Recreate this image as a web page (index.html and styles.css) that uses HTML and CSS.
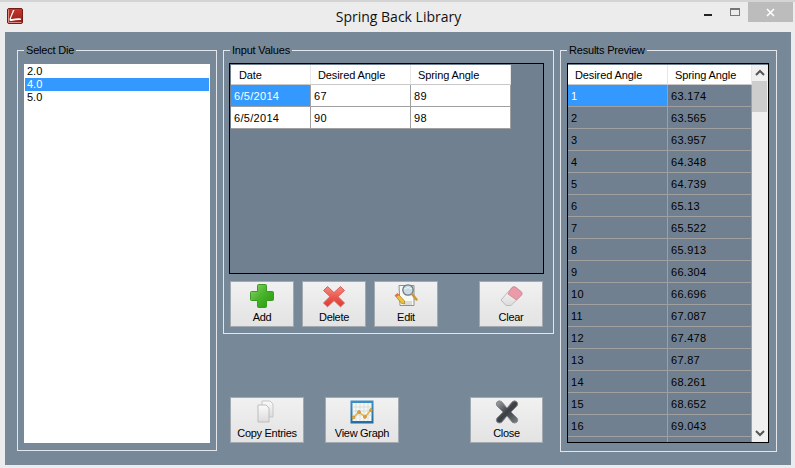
FILE: index.html
```html
<!DOCTYPE html>
<html lang="en">
<head>
<meta charset="utf-8">
<title>Spring Back Library</title>
<link rel="stylesheet" href="styles.css">
</head>
<body>
<svg class="defs" width="0" height="0" aria-hidden="true">
  <defs>
    <linearGradient id="gGreen" x1="0" y1="0" x2="1" y2="1"><stop offset="0" stop-color="#8fd67a"/><stop offset=".45" stop-color="#4cb52c"/><stop offset="1" stop-color="#1f9a06"/></linearGradient>
    <linearGradient id="gRed" x1="0" y1="0" x2="0" y2="1"><stop offset="0" stop-color="#f58a80"/><stop offset=".5" stop-color="#ec5a50"/><stop offset="1" stop-color="#d83c34"/></linearGradient>
    <linearGradient id="gDark" x1="0" y1="0" x2="1" y2="1"><stop offset="0" stop-color="#a5a9ad"/><stop offset=".5" stop-color="#3a3e42"/><stop offset="1" stop-color="#7d8286"/></linearGradient>
    <linearGradient id="gPaper" x1="0" y1="0" x2="0" y2="1"><stop offset="0" stop-color="#fafafa"/><stop offset="1" stop-color="#dcdcdc"/></linearGradient>
    <linearGradient id="gSky" x1="0" y1="0" x2="0" y2="1"><stop offset="0" stop-color="#3f8fc4"/><stop offset="1" stop-color="#1e6ea4"/></linearGradient>
    <linearGradient id="gLogo" x1="0" y1="0" x2="0" y2="1"><stop offset="0" stop-color="#c8372f"/><stop offset="1" stop-color="#8e2019"/></linearGradient>
  </defs>
</svg>
<div class="window">
  <header class="titlebar">
    <div class="title-left">
      <svg class="logo" width="16" height="16" viewBox="0 0 16 16"><rect x=".5" y=".5" width="15" height="15" rx="1.5" fill="url(#gLogo)" stroke="#7a1a14"/><path d="M1.5 1.5 V14.5 H14.5" stroke="#e08a84" fill="none"/><path d="M7.5 2 L4 10 Q3.6 11.4 5.2 11 Q9.5 10 14 10.4 L14 12 Q9 11.8 4.6 13 Q2 13.4 2.6 10.4 L6 2 Z" fill="#fff"/></svg>
    </div>
    <h1 class="title">Spring Back Library</h1>
    <div class="controls">
      <span class="ctl ctl-min"><i></i></span>
      <span class="ctl ctl-max"><i></i></span>
      <span class="ctl ctl-close"><svg width="9" height="9" viewBox="0 0 9 9"><path d="M1 1 L8 8 M8 1 L1 8" stroke="#fff" stroke-width="1.6" fill="none"/></svg></span>
    </div>
  </header>

  <main class="client">
    <fieldset class="group group-die">
      <legend>Select Die</legend>
      <ul class="listbox">
        <li>2.0</li>
        <li class="selected">4.0</li>
        <li>5.0</li>
      </ul>
    </fieldset>

    <div class="middle">
      <fieldset class="group group-input">
        <legend>Input Values</legend>
        <div class="datagrid input-grid">
          <table>
            <thead><tr><th class="c-date">Date</th><th class="c-a">Desired Angle</th><th class="c-a">Spring Angle</th></tr></thead>
            <tbody>
              <tr><td class="sel">6/5/2014</td><td class="white">67</td><td class="white">89</td></tr>
              <tr><td class="white">6/5/2014</td><td class="white">90</td><td class="white">98</td></tr>
            </tbody>
          </table>
        </div>
        <div class="btnrow">
          <button class="btn btn-s">
            <svg width="24" height="24" viewBox="0 0 24 24"><path d="M8.5 .5 H15.5 Q16.5 .5 16.5 1.5 V7.5 H22.5 Q23.5 7.5 23.5 8.5 V15.5 Q23.5 16.5 22.5 16.5 H16.5 V22.5 Q16.5 23.5 15.5 23.5 H8.5 Q7.5 23.5 7.5 22.5 V16.5 H1.5 Q.5 16.5 .5 15.5 V8.5 Q.5 7.5 1.5 7.5 H7.5 V1.5 Q7.5 .5 8.5 .5 Z" fill="url(#gGreen)" stroke="#3c9a22"/></svg>
            <span>Add</span>
          </button>
          <button class="btn btn-s">
            <svg width="24" height="24" viewBox="0 0 24 24"><path d="M5.5 2.5 L12 8.6 L18.5 2.5 L22.5 6.5 L16 12.6 L22.5 19 L18.5 22.8 L12 16.6 L5.5 22.8 L1.5 19 L8 12.6 L1.5 6.5 Z" fill="url(#gRed)" stroke="#d9605a" stroke-linejoin="round" stroke-width="1"/></svg>
            <span>Delete</span>
          </button>
          <button class="btn btn-s">
            <svg width="24" height="24" viewBox="0 0 24 24"><path d="M5 1.5 H20 V21.5 H6 Z" fill="#f8f8f4" stroke="#8a948e"/><path d="M10 18 H18 M11 20 H18" stroke="#b5bcc0"/><circle cx="14" cy="6" r="5.2" fill="#c8dbe6" stroke="#6f7b80" stroke-width="1.3"/><path d="M10 5 Q14 2 18 5" stroke="#eef6fa" fill="none"/><path d="M18 10 L22.5 15.5" stroke="#c9963c" stroke-width="2.4" stroke-linecap="round"/><path d="M1 11.5 L3.6 9.5 L10.5 17 L10.5 20 L7.6 19.4 Z" fill="#f0c23c" stroke="#a67a1a" stroke-width=".7"/><path d="M1 11.5 L3.6 9.5 L5 11 L2.4 13 Z" fill="#e8665c"/></svg>
            <span>Edit</span>
          </button>
          <button class="btn btn-s btn-push">
            <svg width="24" height="24" viewBox="0 0 24 24"><path d="M2 16 L13 3.5 Q15 2 17 3.5 L22.5 8 Q23.5 9.5 22.5 11 L12 21.5 L7 21.5 Z" fill="url(#gPaper)" stroke="#b9b9b9"/><path d="M9 10 L13 3.5 Q15 2 17 3.5 L22.5 8 Q23.5 9.5 22.5 11 L17.5 16 Z" fill="#ea9aa8" stroke="#d58090" stroke-width=".8"/></svg>
            <span>Clear</span>
          </button>
        </div>
      </fieldset>
      <div class="btnrow btnrow-bottom">
        <button class="btn btn-l">
          <svg width="24" height="24" viewBox="0 0 24 24"><path d="M7 1 H15 L18 4 V17 H7 Z" fill="url(#gPaper)" stroke="#c6c6c6"/><path d="M3 5 H11 L14 8 V22 H3 Z" fill="url(#gPaper)" stroke="#bdbdbd"/></svg>
          <span>Copy Entries</span>
        </button>
        <button class="btn btn-l btn-view">
          <svg width="24" height="24" viewBox="0 0 24 24"><rect x=".5" y=".5" width="23" height="23" fill="url(#gSky)"/><rect x="2.5" y="3" width="19" height="18" fill="#f6f6f0"/><path d="M6 3 V21 M10 3 V21 M14 3 V21 M18 3 V21 M2.5 7 H21.5 M2.5 11 H21.5 M2.5 15 H21.5" stroke="#c9d6dc" stroke-width=".7"/><path d="M3 18 L9 12 L15 17 L21 10" stroke="#eeb23c" stroke-width="1.6" fill="none"/><circle cx="3.5" cy="17.5" r="1.4" fill="#eeb23c" stroke="#a8761f" stroke-width=".6"/><circle cx="9" cy="12" r="1.4" fill="#eeb23c" stroke="#a8761f" stroke-width=".6"/><circle cx="15" cy="17" r="1.4" fill="#eeb23c" stroke="#a8761f" stroke-width=".6"/><circle cx="21" cy="10" r="1.4" fill="#eeb23c" stroke="#a8761f" stroke-width=".6"/></svg>
          <span>View Graph</span>
        </button>
        <button class="btn btn-c btn-close-gap">
          <svg width="24" height="24" viewBox="0 0 24 24"><path d="M6.5 1.5 L12 8 L17.5 1.5 Q20 0 22 2 Q23.5 4 22 6 L16 12 L22 18 Q23.5 20 22 22 Q20 23.8 17.5 22.5 L12 16 L6.5 22.5 Q4 23.8 2 22 Q.5 20 2 18 L8 12 L2 6 Q.5 4 2 2 Q4 0 6.5 1.5 Z" fill="url(#gDark)" stroke="#85898d" stroke-width="1"/></svg>
          <span>Close</span>
        </button>
      </div>
    </div>

    <fieldset class="group group-results">
      <legend>Results Preview</legend>
      <div class="datagrid results-grid">
        <div class="results-table">
          <table>
            <thead><tr><th class="r-a">Desired Angle</th><th class="r-b">Spring Angle</th></tr></thead>
            <tbody>
              <tr><td class="sel">1</td><td>63.174</td></tr>
              <tr><td>2</td><td>63.565</td></tr>
              <tr><td>3</td><td>63.957</td></tr>
              <tr><td>4</td><td>64.348</td></tr>
              <tr><td>5</td><td>64.739</td></tr>
              <tr><td>6</td><td>65.13</td></tr>
              <tr><td>7</td><td>65.522</td></tr>
              <tr><td>8</td><td>65.913</td></tr>
              <tr><td>9</td><td>66.304</td></tr>
              <tr><td>10</td><td>66.696</td></tr>
              <tr><td>11</td><td>67.087</td></tr>
              <tr><td>12</td><td>67.478</td></tr>
              <tr><td>13</td><td>67.87</td></tr>
              <tr><td>14</td><td>68.261</td></tr>
              <tr><td>15</td><td>68.652</td></tr>
              <tr><td>16</td><td>69.043</td></tr>
              <tr><td>&nbsp;</td><td>&nbsp;</td></tr>
            </tbody>
          </table>
        </div>
        <div class="scrollbar">
          <svg class="arrow" width="16" height="16" viewBox="0 0 16 16"><path d="M4 10 L8 6 L12 10" stroke="#555" stroke-width="2" fill="none"/></svg>
          <div class="thumb"></div>
          <svg class="arrow arrow-down" width="16" height="16" viewBox="0 0 16 16"><path d="M4 6 L8 10 L12 6" stroke="#555" stroke-width="2" fill="none"/></svg>
        </div>
      </div>
    </fieldset>
  </main>
</div>
</body>
</html>
```

FILE: styles.css
```css
* { box-sizing: border-box; }
html, body { margin: 0; padding: 0; }
body {
  width: 795px;
  height: 468px;
  overflow: hidden;
  background: #ececec;
  font-family: "Liberation Sans", Arial, sans-serif;
  font-size: 11px;
  color: #000;
}
.defs { display: block; height: 0; }
.window {
  height: 468px;
  display: flex;
  flex-direction: column;
  border-top: 2px solid #d4d4d4;
}
.titlebar {
  height: 30px;
  display: grid;
  grid-template-columns: 1fr auto 1fr;
  align-items: start;
}
.title-left { padding: 6px 0 0 7px; }
.logo { display: block; }
.title {
  margin: 0;
  padding: 6px 0 0 2px;
  font-family: "Open Sans", sans-serif;
  font-size: 14px;
  line-height: 18px;
  font-weight: 400;
  color: #111;
}
.controls {
  display: flex;
  justify-content: flex-end;
  align-items: flex-start;
  padding-right: 2px;
}
.ctl { display: flex; align-items: center; justify-content: center; height: 20px; }
.ctl-min { width: 28px; }
.ctl-min i { display: block; width: 8px; height: 2px; margin-top: 6px; background: #222; }
.ctl-max { width: 26px; }
.ctl-max i { display: block; width: 10px; height: 8px; border: 1px solid #777; border-top-width: 2px; }
.ctl-close { width: 45px; background: #bcbcbc; }
.client {
  flex: 1;
  margin: 0 4px 3px 5px;
  padding: 12px 0 0 12px;
  background: #778899;
  display: grid;
  grid-template-columns: 200px 331px 217px;
  column-gap: 6px;
  align-items: start;
}
.group {
  margin: 0;
  min-width: 0;
  border: 1px solid #e3e6ea;
}
.group legend {
  margin-left: 0;
  padding: 0 2px;
  line-height: 13px;
  letter-spacing: -.2px;
  color: #000;
}
.group-die { height: 407px; padding: 7px 6px 7px 6px; }
.listbox {
  list-style: none;
  margin: 0;
  padding: 1px 1px;
  height: 379px;
  background: #fff;
}
.listbox li { height: 13px; line-height: 13px; padding-left: 2px; }
.listbox li.selected { background: #3399ff; color: #fff; }
.middle { display: flex; flex-direction: column; }
.group-input { height: 290px; padding: 6px 9px 0 5px; }
.group-input legend { margin-left: 1px; }
.datagrid {
  border: 1px solid #000;
  background: #708090;
  padding-top: 1px;
}
.input-grid { height: 211px; padding-left: 1px; }
table { border-collapse: separate; border-spacing: 0; table-layout: fixed; }
.input-grid table { width: 280px; }
th {
  height: 20px;
  padding: 0 0 0 7px;
  background: #fff;
  font-weight: 400;
  text-align: left;
  letter-spacing: -.1px;
  border-right: 1px solid #e6e6e6;
  border-bottom: 1px solid #c8c8c8;
}
td {
  height: 22px;
  padding: 0 0 0 3px;
  letter-spacing: .3px;
  border-right: 1px solid #a0a0a0;
  border-bottom: 1px solid #a0a0a0;
  background: #708090;
}
td.white { background: #fff; }
td.sel { background: #3399ff; color: #fff; }
.c-date { width: 80px; }
th.c-date { padding-left: 8px; }
.c-a { width: 100px; }
.btnrow { display: flex; gap: 8px; margin-top: 7px; padding-left: 1px; }
.btnrow-bottom { margin-top: 63px; padding-left: 7px; gap: 21px; }
.btn {
  height: 46px;
  padding: 2px 0 0;
  display: flex;
  flex-direction: column;
  align-items: center;
  gap: 3px;
  border: 1px solid #a3a9b0;
  border-radius: 0;
  background: linear-gradient(#f1f1f1, #e3e3e3);
  font: inherit;
  letter-spacing: -.3px;
  color: #000;
}
.btn svg { display: block; flex: none; }
.btn span { line-height: 13px; }
.btn-s { width: 64px; }
.btn-l { width: 74px; }
.btn-c { width: 73px; }
.btn-push { margin-left: 33px; }
.btn-close-gap { margin-left: 50px; }
.group-results { height: 408px; padding: 6px 7px 0 6px; }
.results-grid { height: 380px; display: flex; overflow: hidden; }
.results-table { width: 184px; height: 377px; overflow: hidden; }
.results-table table { width: 184px; }
.r-a { width: 100px; }
.r-b { width: 84px; }
.scrollbar {
  width: 16px;
  background: #f0f0f0;
  display: flex;
  flex-direction: column;
}
.arrow { display: block; flex: none; }
.thumb { width: 15px; height: 31px; background: #cdcdcd; }
.arrow-down { margin-top: auto; margin-bottom: 1px; }
```
